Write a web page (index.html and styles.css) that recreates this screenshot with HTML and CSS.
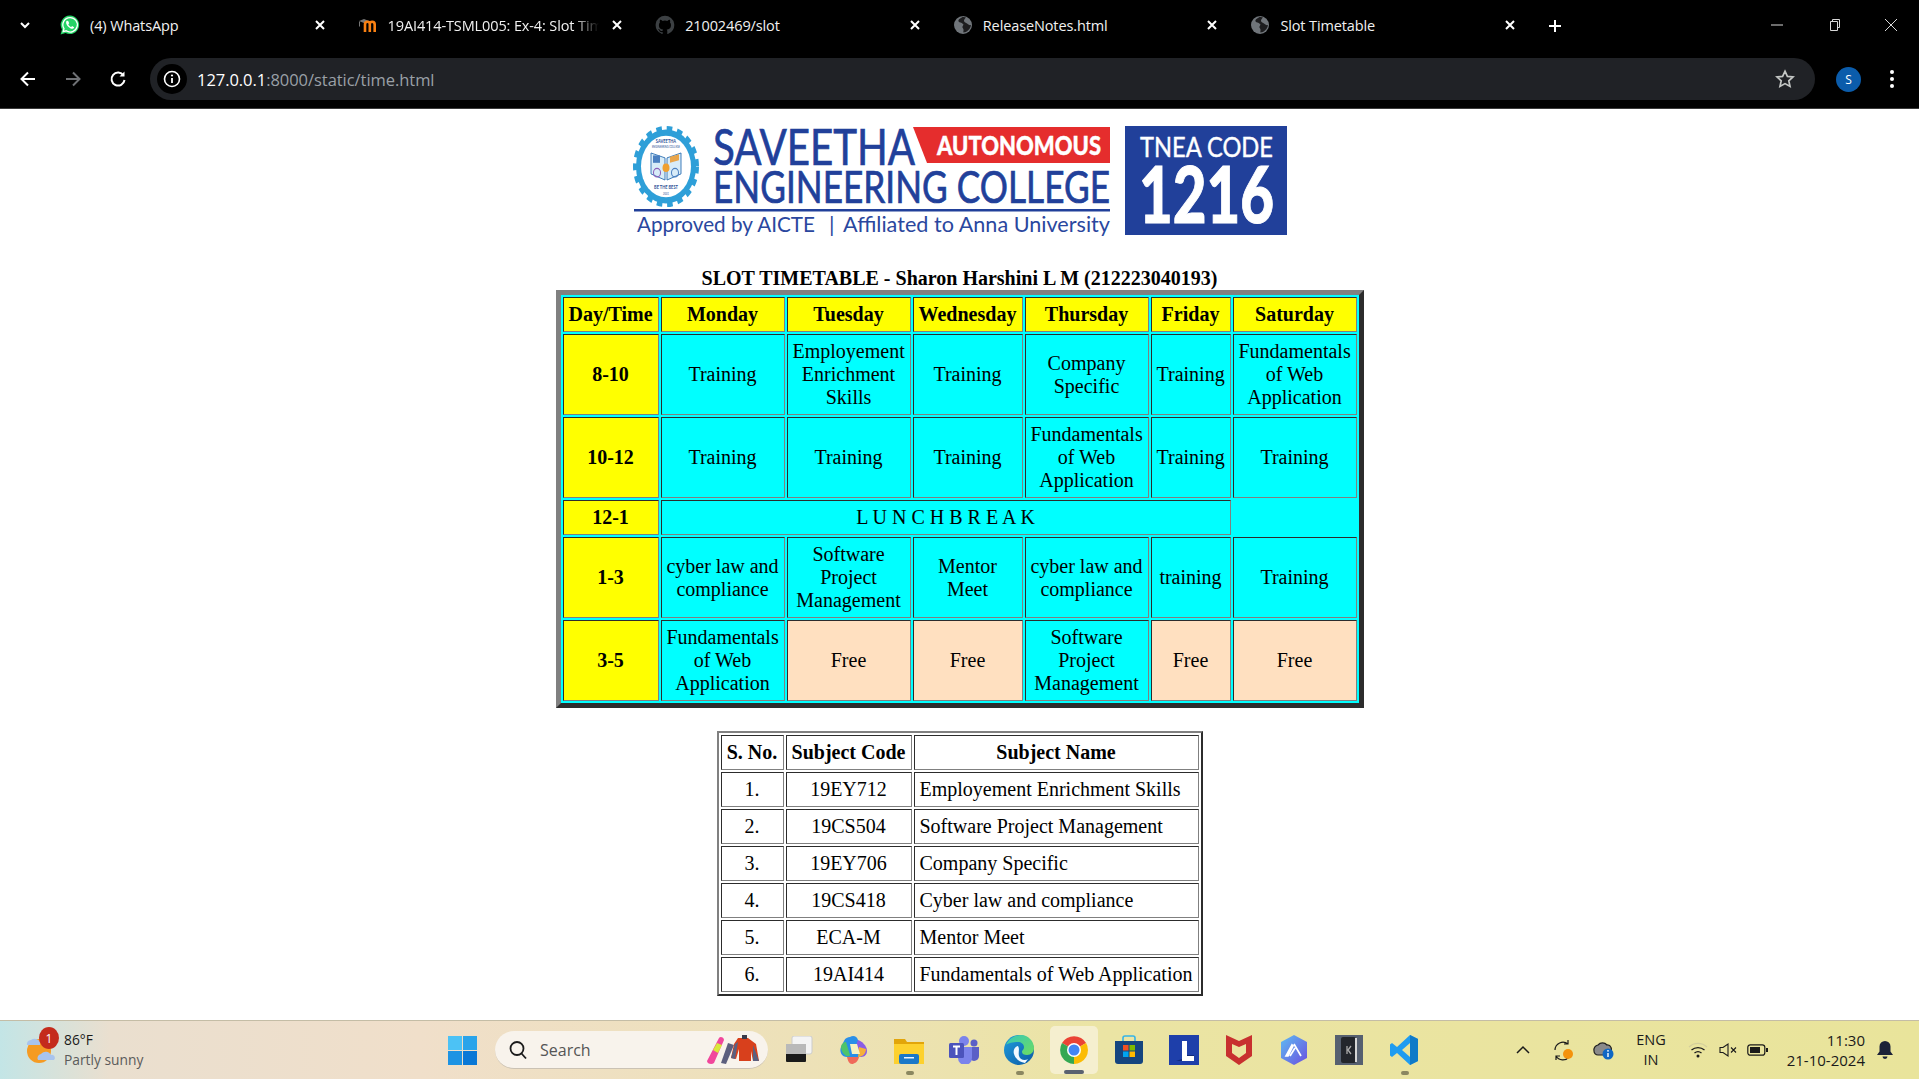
FILE: index.html
```html
<!DOCTYPE html>
<html lang="en">
<head>
<meta charset="utf-8">
<title>Slot Timetable</title>
<link rel="stylesheet" href="styles.css">
</head>
<body>
<div class="screen">
<header class="chrome">
  <div class="tabbar">
    <div class="tab-search"><svg width="14" height="14" viewBox="0 0 14 14"><path d="M3 5l4 4 4-4" class="ln-white2"/></svg></div>
    <div class="tab">
      <svg class="fav" viewBox="0 0 20 20"><path d="M10 .5a9.3 9.3 0 0 0-8 14L.6 19.4l5-1.3A9.3 9.3 0 1 0 10 .5z" fill="#25d366"/><path d="M10 2.6a7.2 7.2 0 0 0-6 11.1l-.8 2.9 3-.8A7.2 7.2 0 1 0 10 2.6z" fill="none" stroke="#fff" stroke-width="1.3"/><path d="M7.2 5.8c-.4 0-1 .5-1.1 1.4-.2 1.400.9 3.200 2.200 4.500 1.400 1.300 3 2.200 4.300 2 .9-.1 1.500-.8 1.500-1.400l-2-1.200-.9 1c-1-.3-2.500-1.700-2.900-2.900l.9-.9-1-2.300z" fill="#fff"/></svg>
      <span class="tab-title">(4) WhatsApp</span>
      <svg class="tab-x" viewBox="0 0 16 16"><path d="M4 4l8 8M12 4l-8 8" class="ln-white2"/></svg>
    </div>
    <div class="tab">
      <svg class="fav" viewBox="0 0 20 20"><path d="M1 6l5-2 5 2-5 2z" fill="#777"/><path d="M1.500 6.500v5" stroke="#777" stroke-width="1"/><path d="M7 17V9.500c0-1.800 1-2.700 2.500-2.700s2.300.9 2.300 2.300V17M11.800 9c0-1.400 1-2.200 2.400-2.200 1.500 0 2.500 1 2.500 2.800V17" fill="none" stroke="#f98012" stroke-width="2.600"/></svg>
      <span class="tab-title tab-fade">19AI414-TSML005: Ex-4: Slot Timetable</span>
      <svg class="tab-x" viewBox="0 0 16 16"><path d="M4 4l8 8M12 4l-8 8" class="ln-white2"/></svg>
    </div>
    <div class="tab">
      <svg class="fav" viewBox="0 0 20 20"><path d="M10 .8a9.400 9.400 0 0 0-3 18.300c.5.100.6-.2.600-.4v-1.700c-2.600.6-3.200-1.100-3.200-1.100-.4-1.100-1-1.400-1-1.400-.9-.6.100-.6.100-.6.900.1 1.400 1 1.400 1 .8 1.400 2.200 1 2.700.8.100-.6.300-1 .6-1.200-2.100-.2-4.300-1-4.300-4.600 0-1 .4-1.900 1-2.500-.1-.3-.4-1.200.1-2.500 0 0 .8-.3 2.600 1a9 9 0 0 1 4.700 0c1.800-1.300 2.600-1 2.600-1 .5 1.300.2 2.200.1 2.500.6.600 1 1.500 1 2.500 0 3.600-2.200 4.400-4.300 4.600.3.300.6.900.6 1.700v2.500c0 .2.100.5.600.4A9.400 9.400 0 0 0 10 .8z" fill="#3c4043"/></svg>
      <span class="tab-title">21002469/slot</span>
      <svg class="tab-x" viewBox="0 0 16 16"><path d="M4 4l8 8M12 4l-8 8" class="ln-white2"/></svg>
    </div>
    <div class="tab">
      <svg class="fav" viewBox="0 0 20 20"><circle cx="10" cy="10" r="9" fill="#70757a"/><path d="M10 1.500c-1.500 1.500-3.500 2-4.500 3.500-.5 1 .5 2.500 2 2.500 1 0 1.500 1 2.500 1.500 1 .5 0 1.500-.5 2.500-.5 1 .5 1.500 1 3 .3 1-.5 2.500 0 3 3-.2 7-3 7.500-7.500-1.500.5-3-.5-4-1.500-1-1-2.500-1-3-2.500-.3-1 1-2.500 2-3.500-.8-.5-2-.7-3-.5z" fill="#1d1d1f"/></svg>
      <span class="tab-title">ReleaseNotes.html</span>
      <svg class="tab-x" viewBox="0 0 16 16"><path d="M4 4l8 8M12 4l-8 8" class="ln-white2"/></svg>
    </div>
    <div class="tab">
      <svg class="fav" viewBox="0 0 20 20"><circle cx="10" cy="10" r="9" fill="#70757a"/><path d="M10 1.500c-1.500 1.500-3.500 2-4.500 3.500-.5 1 .5 2.500 2 2.500 1 0 1.500 1 2.500 1.500 1 .5 0 1.500-.5 2.500-.5 1 .5 1.500 1 3 .3 1-.5 2.500 0 3 3-.2 7-3 7.500-7.500-1.500.5-3-.5-4-1.500-1-1-2.500-1-3-2.500-.3-1 1-2.500 2-3.500-.8-.5-2-.7-3-.5z" fill="#1d1d1f"/></svg>
      <span class="tab-title">Slot Timetable</span>
      <svg class="tab-x" viewBox="0 0 16 16"><path d="M4 4l8 8M12 4l-8 8" class="ln-white2"/></svg>
    </div>
    <div class="tab-new"><svg width="16" height="16" viewBox="0 0 16 16"><path d="M8 2v12M2 8h12" class="ln-white2"/></svg></div>
    <div class="win-controls">
      <svg width="14" height="14" viewBox="0 0 14 14"><path d="M1 7h12" class="ln-thin"/></svg>
      <svg width="14" height="14" viewBox="0 0 14 14"><path d="M3.500 3.500h7v9h-7zM5.500 3.500V1.500h7v8h-2" class="ln-thin"/></svg>
      <svg width="14" height="14" viewBox="0 0 14 14"><path d="M1 1l12 12M13 1L1 13" class="ln-thin"/></svg>
    </div>
  </div>
  <div class="toolbar">
    <div class="nav-btn"><svg width="20" height="20" viewBox="0 0 20 20"><path d="M17 10H4M10 3.500L3.500 10l6.500 6.500" class="ln-white2"/></svg></div>
    <div class="nav-btn"><svg width="20" height="20" viewBox="0 0 20 20"><path d="M3 10h13M10 3.500l6.500 6.500-6.500 6.500" class="ln-gray2"/></svg></div>
    <div class="nav-btn"><svg width="20" height="20" viewBox="0 0 20 20"><path d="M15.500 6.500A6.500 6.500 0 1 0 16.500 11" class="ln-white2"/><path d="M16.500 2.500v5h-5z" fill="#fff"/></svg></div>
    <div class="omnibox">
      <div class="site-info"><svg width="18" height="18" viewBox="0 0 18 18"><circle cx="9" cy="9" r="7.500" fill="none" stroke="#fff" stroke-width="1.600"/><path d="M9 8v5" stroke="#fff" stroke-width="1.800"/><circle cx="9" cy="5.500" r="1.100" fill="#fff"/></svg></div>
      <span class="url"><span class="url-host">127.0.0.1</span>:8000/static/time.html</span>
      <svg class="star" width="20" height="20" viewBox="0 0 20 20"><path d="M10 2.200l2.400 5.200 5.600.6-4.200 3.800 1.200 5.600L10 14.600 5 17.400l1.200-5.600L2 8l5.600-.6z" fill="none" stroke="#c4c7c5" stroke-width="1.700"/></svg>
    </div>
    <div class="avatar">S</div>
    <div class="menu-dots"><i></i><i></i><i></i></div>
  </div>
</header>

<main class="page">
  <svg class="logo" viewBox="632 126 655 110" role="img" aria-label="Saveetha Engineering College logo">
    <g transform="translate(666 166.500) scale(1 1.230) translate(-666 -166)">
      <circle cx="666" cy="166" r="27" class="gear-ring"/>
      <circle cx="666" cy="166" r="30.500" class="gear-teeth"/>
      <circle cx="666" cy="166" r="25" class="gear-face"/>
      <text x="666" y="147" class="logo-mini">SAVEETHA</text>
      <text x="666" y="151" class="logo-micro">ENGINEERING COLLEGE</text>
      <path d="M651 155l14 4v18l-14-5zM681 155l-14 4v18l14-5z" fill="#d8ecf8" stroke="#2c6fb3" stroke-width=".8"/>
      <rect x="653" y="157" width="7" height="6" fill="#4a7fc0"/>
      <path d="M670 158l9-2v5l-9 2z" fill="#e9a54a"/>
      <circle cx="666" cy="167" r="3.500" fill="#f0a030"/>
      <circle cx="657" cy="171" r="3.500" fill="none" stroke="#8a5cb8"/>
      <circle cx="675" cy="171" r="3.500" fill="none" stroke="#4a7fc0"/>
      <text x="666" y="184" class="logo-mini">BE THE BEST</text>
      <text x="666" y="189" class="logo-micro">2001</text>
    </g>
    <text x="713" y="165" class="logo-t1" textLength="202" lengthAdjust="spacingAndGlyphs">SAVEETHA</text>
    <path d="M913 127h197v36H927z" fill="#e52d2d"/>
    <text x="937" y="155" class="logo-auto" textLength="164" lengthAdjust="spacingAndGlyphs">AUTONOMOUS</text>
    <text x="713" y="203" class="logo-t2" textLength="397" lengthAdjust="spacingAndGlyphs">ENGINEERING COLLEGE</text>
    <rect x="634" y="209" width="476" height="2.500" fill="#21409a"/>
    <text x="637" y="232" class="logo-t3" textLength="178" lengthAdjust="spacingAndGlyphs">Approved by AICTE</text>
    <text x="829" y="232" class="logo-t3">|</text>
    <text x="843" y="232" class="logo-t3" textLength="267" lengthAdjust="spacingAndGlyphs">Affiliated to Anna University</text>
    <rect x="1125" y="126" width="162" height="109" fill="#21409a"/>
    <text x="1140" y="157" class="logo-tnea" textLength="133" lengthAdjust="spacingAndGlyphs">TNEA CODE</text>
    <text x="1139" y="223" class="logo-code" textLength="135" lengthAdjust="spacingAndGlyphs">1216</text>
  </svg>

  <h1 class="title">SLOT TIMETABLE - Sharon Harshini L M (212223040193)</h1>

  <table class="slots">
    <colgroup>
      <col class="c-day"><col class="c-wide"><col class="c-wide"><col class="c-wed"><col class="c-wide"><col class="c-fri"><col class="c-wide">
    </colgroup>
    <tr><th>Day/Time</th><th>Monday</th><th>Tuesday</th><th>Wednesday</th><th>Thursday</th><th>Friday</th><th>Saturday</th></tr>
    <tr><th>8-10</th><td>Training</td><td>Employement Enrichment Skills</td><td>Training</td><td>Company Specific</td><td>Training</td><td>Fundamentals of Web Application</td></tr>
    <tr><th>10-12</th><td>Training</td><td>Training</td><td>Training</td><td>Fundamentals of Web Application</td><td>Training</td><td>Training</td></tr>
    <tr><th>12-1</th><td colspan="5">L U N C H B R E A K</td></tr>
    <tr><th>1-3</th><td class="nw">cyber law and<br>compliance</td><td>Software Project Management</td><td>Mentor Meet</td><td class="nw">cyber law and<br>compliance</td><td>training</td><td>Training</td></tr>
    <tr><th>3-5</th><td>Fundamentals of Web Application</td><td class="free">Free</td><td class="free">Free</td><td>Software Project Management</td><td class="free">Free</td><td class="free">Free</td></tr>
  </table>

  <table class="subjects">
    <colgroup><col class="s-no"><col class="s-code"><col class="s-name"></colgroup>
    <tr><th>S. No.</th><th>Subject Code</th><th>Subject Name</th></tr>
    <tr><td>1.</td><td>19EY712</td><td class="name">Employement Enrichment Skills</td></tr>
    <tr><td>2.</td><td>19CS504</td><td class="name">Software Project Management</td></tr>
    <tr><td>3.</td><td>19EY706</td><td class="name">Company Specific</td></tr>
    <tr><td>4.</td><td>19CS418</td><td class="name">Cyber law and compliance</td></tr>
    <tr><td>5.</td><td>ECA-M</td><td class="name">Mentor Meet</td></tr>
    <tr><td>6.</td><td>19AI414</td><td class="name">Fundamentals of Web Application</td></tr>
  </table>
</main>

<footer class="taskbar">
  <div class="weather">
    <div class="weather-icon">
      <svg width="32" height="36" viewBox="0 0 32 36"><circle cx="15" cy="20" r="12" fill="#f59b23"/><path d="M3 14a4 4 0 0 1 4-5 6 6 0 0 1 9 2v3z" fill="#a8c4ee"/><path d="M14 29a4 4 0 0 1 3-6 6 6 0 0 1 10 1 3 3 0 0 1 3 5z" fill="#a8c4ee"/></svg>
      <span class="badge">1</span>
    </div>
    <div class="weather-text"><span class="temp">86°F</span><span class="cond">Partly sunny</span></div>
  </div>
  <div class="start">
    <svg width="29" height="29" viewBox="0 0 29 29"><rect width="14" height="14" fill="#4cc2f5"/><rect x="15" width="14" height="14" fill="#2aa4ea"/><rect y="15" width="14" height="14" fill="#1d93e3"/><rect x="15" y="15" width="14" height="14" fill="#0a78d6"/></svg>
  </div>
  <div class="search">
    <svg width="20" height="20" viewBox="0 0 20 20"><circle cx="9" cy="8.500" r="6.500" fill="none" stroke="#1b1b1b" stroke-width="1.800"/><path d="M13.500 13.500l4.500 5" stroke="#1b1b1b" stroke-width="1.800"/></svg>
    <span class="search-label">Search</span>
    <svg class="search-art" width="54" height="30" viewBox="0 0 54 30"><path d="M1 26L13 3c1-2 5-1 5 2L8 28c-2 2-7 1-7-2z" fill="#f1479c"/><path d="M7 15l4-7 5 2-4 8z" fill="#d9e83a"/><path d="M22 8l6 2-8 19-5-1z" fill="#5c5f7e"/><path d="M32 3h10l8 6 3 17h-6l-2-10v10H33V14l-3 10-5-1 3-14z" fill="#d8401c"/><path d="M47 10l6 16h-6zM25 23l4-14 3-2-3 17z" fill="#5b6080"/><rect x="36" y="0" width="5" height="4" fill="#3a3a4a"/></svg>
  </div>
  <div class="apps">
    <div class="app"><svg width="30" height="28" viewBox="0 0 30 28"><rect x="8" y="0" width="20" height="18" rx="2" fill="#f4f4f4" stroke="#ccc"/><rect x="2" y="8" width="20" height="18" rx="1" fill="#1a1a1a"/><rect x="2" y="8" width="20" height="10" fill="#b9b9b9"/></svg></div>
    <div class="app"><svg width="30" height="30" viewBox="0 0 30 30"><path d="M11 2c3-2 7-1 8 3l4 12c1 4-3 5-5 5H8C3 22 0 17 2 12l3-6c1-3 4-4 6-4z" fill="#2a8fe8"/><path d="M19 5c3 1 9 5 9 11 0 5-4 6-7 6l-4-12z" fill="#8a5ce6"/><path d="M2 12c0-3 3-5 5-5l4 13c-1 3-8 1-9-8z" fill="#4fc46a"/><path d="M8 22h12c-1 5-5 7-7 7-3 0-4-3-5-7z" fill="#f06a5a"/><path d="M20 12l7 2c0 5-4 8-8 8z" fill="#f5b03a"/><path d="M11 9h7l3 10H13z" fill="#f7f2c0"/></svg></div>
    <div class="app has-dot"><svg width="30" height="28" viewBox="0 0 30 28"><path d="M0 3h11l2 3h17v22H0z" fill="#e2a50a"/><path d="M0 8h30v20H0z" fill="#fdd12e"/><rect x="5" y="18" width="20" height="10" rx="2" fill="#1a78c8"/><rect x="10" y="21" width="10" height="1.500" fill="#e8f4ff"/></svg></div>
    <div class="app"><svg width="30" height="28" viewBox="0 0 30 28"><circle cx="25" cy="7" r="3.500" fill="#5b5fc7"/><circle cx="15" cy="5" r="5" fill="#7b83eb"/><path d="M20 11h10v9a5 5 0 0 1-10 0z" fill="#5b5fc7"/><path d="M9 11h14v11a7 7 0 0 1-14 0z" fill="#7b83eb"/><rect x="0" y="7" width="15" height="15" rx="1.500" fill="#4b53bc"/><path d="M4 10.500h7M7.500 10.500V19" stroke="#fff" stroke-width="2"/></svg></div>
    <div class="app has-dot"><svg width="30" height="30" viewBox="0 0 30 30"><defs><linearGradient id="edgeA" x1="0" y1="0" x2="1" y2="1"><stop offset="0" stop-color="#1f9ddd"/><stop offset="1" stop-color="#0c59a4"/></linearGradient><linearGradient id="edgeB" x1="0" y1="0" x2="1" y2="1"><stop offset="0" stop-color="#37c9b8"/><stop offset="1" stop-color="#6fdc5f"/></linearGradient></defs><circle cx="15" cy="15" r="15" fill="url(#edgeA)"/><path d="M2 10C5 3 12 0 17 0c7 0 13 6 13 13 0 4-3 7-7 7-3 0-5-1-5-3 0-2 2-2 2-5 0-3-3-5-6-5-5 0-10 1-12 3z" fill="url(#edgeB)"/><path d="M14 11c-4 1-5 5-4 8 1 4 5 8 11 9l3-4c-3 2-8 1-9-3-1-4 1-7-1-10z" fill="#f0f8ff"/></svg></div>
    <div class="app app-active has-bar"><svg width="30" height="30" viewBox="0 0 30 30"><path d="M15 15L3 8A14 14 0 0 1 27.100 8z" fill="#ea4335"/><path d="M15 15L27.100 8A14 14 0 0 1 15 29z" fill="#fbbc04"/><path d="M15 15L15 29A14 14 0 0 1 3 8z" fill="#34a853"/><circle cx="15" cy="15" r="7" fill="#fff"/><circle cx="15" cy="15" r="5.500" fill="#4285f4"/></svg></div>
    <div class="app"><svg width="30" height="30" viewBox="0 0 30 30"><path d="M9 6V3a2 2 0 0 1 2-2h8a2 2 0 0 1 2 2v3" fill="none" stroke="#36b4e8" stroke-width="1.600"/><path d="M1 6h28v20a3 3 0 0 1-3 3H4a3 3 0 0 1-3-3z" fill="#15457f"/><rect x="9" y="10" width="5.500" height="5.500" fill="#f25022"/><rect x="15.500" y="10" width="5.500" height="5.500" fill="#7fba00"/><rect x="9" y="16.500" width="5.500" height="5.500" fill="#00a4ef"/><rect x="15.500" y="16.500" width="5.500" height="5.500" fill="#ffb900"/></svg></div>
    <div class="app"><svg width="30" height="30" viewBox="0 0 30 30"><rect width="30" height="30" fill="#1e3faa"/><path d="M7 26L13 24V6h5v14h7v6z" fill="#102a78"/><path d="M13 6h5v15h7v5H13z" fill="#fff"/></svg></div>
    <div class="app"><svg width="26" height="30" viewBox="0 0 26 30"><path d="M0 0l13 6 13-6v21l-13 9-13-9z" fill="#c8302f"/><path d="M6 9l7 3 7-3v9l-7 5-7-5z" fill="#ece49f"/></svg></div>
    <div class="app"><svg width="28" height="30" viewBox="0 0 28 30"><defs><linearGradient id="atlasG" x1="0" y1="0" x2="1" y2="1"><stop offset="0" stop-color="#5dbcf2"/><stop offset="1" stop-color="#6b4fe0"/></linearGradient></defs><path d="M14 0l13 7v16l-13 7-13-7V7z" fill="url(#atlasG)"/><path d="M6 21l6-11 1 1-5 10zM14 9l7 12M10 21l5-8" fill="none" stroke="#fff" stroke-width="1.700"/></svg></div>
    <div class="app"><svg width="28" height="30" viewBox="0 0 28 30"><rect width="28" height="30" fill="#566070"/><rect x="6" y="2" width="15" height="26" rx="2" fill="#23262c"/><rect x="20" y="3" width="2" height="24" fill="#d5d5d5"/><path d="M12 11v8M16 11l-3 4 3 4" stroke="#aaa" stroke-width="1.300" fill="none"/></svg></div>
    <div class="app has-dot"><svg width="28" height="30" viewBox="0 0 28 30"><path d="M20 0l8 4v22l-8 4L7 18l-5 4-2-1.500V9.500L2 8l5 4z" fill="#1f9cf0"/><path d="M20 0l8 4v22l-8 4z" fill="#0f7ac8"/><path d="M20 8l-8 7 8 7z" fill="#e9e49b"/></svg></div>
  </div>
  <div class="tray">
    <div class="tray-i t-chev"><svg width="14" height="10" viewBox="0 0 14 10"><path d="M1 8l6-6 6 6" fill="none" stroke="#1a1a1a" stroke-width="1.500"/></svg></div>
    <div class="tray-i t-sync"><svg width="22" height="22" viewBox="0 0 22 22"><path d="M3 11a8 8 0 0 1 13-6M16 1v4h-4M17 18a8 8 0 0 1-13-1M4 21v-4h4" fill="none" stroke="#1a1a1a" stroke-width="1.200"/><circle cx="16" cy="15" r="5" fill="#f4920c"/></svg></div>
    <div class="tray-i t-cloud"><svg width="22" height="20" viewBox="0 0 22 20"><path d="M2 11a5 5 0 0 1 4-6 6 6 0 0 1 9 0 4 4 0 0 1 3 7l-2 3H6a4 4 0 0 1-4-4z" fill="#8a8a8a" stroke="#222" stroke-width="1.200"/><circle cx="16" cy="14" r="5.500" fill="#0f67c4"/><path d="M16 13v4" stroke="#fff" stroke-width="1.400"/><circle cx="16" cy="10.800" r=".9" fill="#fff"/></svg></div>
    <div class="tray-lang"><span>ENG</span><span>IN</span></div>
    <div class="tray-i t-wifi"><svg width="20" height="16" viewBox="0 0 20 16"><path d="M1 5a13 13 0 0 1 18 0" fill="none" stroke="#d4cf9c" stroke-width="1.300"/><path d="M3.500 8a10 10 0 0 1 13 0M6.500 11a5.500 5.500 0 0 1 7 0" fill="none" stroke="#1a1a1a" stroke-width="1.300"/><circle cx="10" cy="14" r="1.500" fill="#1a1a1a"/></svg></div>
    <div class="tray-i t-vol"><svg width="20" height="16" viewBox="0 0 20 16"><path d="M1 5.500h3L9 2v12L4 10.500H1z" fill="none" stroke="#1a1a1a" stroke-width="1.100"/><path d="M12 5.500l5 5M17 5.500l-5 5" stroke="#1a1a1a" stroke-width="1.100"/></svg></div>
    <div class="tray-i t-bat"><svg width="21" height="14" viewBox="0 0 21 14"><rect x=".8" y="1.800" width="17" height="10.400" rx="2.500" fill="none" stroke="#1a1a1a" stroke-width="1.200"/><rect x="3" y="4" width="10" height="6" fill="#1a1a1a"/><rect x="19" y="5" width="2" height="4" fill="#1a1a1a"/></svg></div>
    <div class="clock"><span>11:30</span><span>21-10-2024</span></div>
    <div class="tray-i t-bell"><svg width="18" height="20" viewBox="0 0 18 20"><path d="M9 1a5.500 5.500 0 0 1 5.500 5.500v5l2.500 3.500H1l2.500-3.500v-5A5.500 5.500 0 0 1 9 1z" fill="#1c2238"/><path d="M6.500 16.500h5a2.500 2.500 0 0 1-5 0z" fill="#1c2238"/></svg></div>
  </div>
</footer>
</div>
</body>
</html>
```

FILE: styles.css
```css
* { box-sizing: border-box; }
html, body { margin: 0; height: 100%; overflow: hidden; background: #fff; }
.screen { display: flex; flex-direction: column; height: 1079px; width: 1919px; }

/* browser chrome */
.chrome { background: #000; color: #fff; font-family: "Open Sans", "Noto Sans", sans-serif; flex: none; }
.ln-white2 { fill: none; stroke: #fff; stroke-width: 2; }
.ln-gray2 { fill: none; stroke: #6f7175; stroke-width: 2; }
.ln-thin { fill: none; stroke: #d8d8d8; stroke-width: 1; }
.tabbar { height: 55px; display: flex; align-items: center; padding-bottom: 5px; }
.tab-search { width: 52px; display: flex; justify-content: center; padding-right: 2px; }
.tab { width: 297.600px; height: 34px; display: flex; align-items: center; padding: 0 22px 0 8px; flex: none; }
.fav { width: 20px; height: 20px; margin-right: 10px; flex: none; }
.tab-title { flex: 1; font-size: 14.500px; white-space: nowrap; overflow: hidden; color: #f1f1f1; margin-right: 10px; letter-spacing: -.12px; }
.tab-fade { -webkit-mask-image: linear-gradient(90deg, #000 88%, transparent 100%); mask-image: linear-gradient(90deg, #000 88%, transparent 100%); }
.tab-x { width: 16px; height: 16px; flex: none; }
.tab-new { width: 16px; height: 16px; margin-left: 7.500px; flex: none; }
.win-controls { margin-left: auto; display: flex; gap: 43px; padding-right: 21px; }
.toolbar { height: 54px; display: flex; align-items: center; padding: 3px 12px 8px 5px; border-bottom: 1px solid #3a3a3a; }
.nav-btn { width: 45px; height: 42px; display: flex; align-items: center; justify-content: center; flex: none; }
.omnibox { flex: 1; margin-left: 10px; height: 42px; border-radius: 21px; background: #202226; display: flex; align-items: center; padding: 0 20px 0 7px; }
.site-info { width: 30px; height: 30px; border-radius: 50%; background: #000; display: flex; align-items: center; justify-content: center; flex: none; }
.url { margin-left: 10px; padding-top: 1px; font-size: 16.500px; color: #9aa0a6; flex: 1; letter-spacing: -.05px; }
.url-host { color: #fff; }
.avatar { margin-left: 21px; width: 25px; height: 25px; border-radius: 50%; background: #0b5cab; color: #fff; font-size: 12px; display: flex; align-items: center; justify-content: center; flex: none; }
.menu-dots { margin-left: 16px; width: 30px; display: flex; flex-direction: column; align-items: center; gap: 3px; flex: none; }
.menu-dots i { width: 4px; height: 4px; border-radius: 50%; background: #fff; }

/* page */
.page { flex: 1; display: flex; flex-direction: column; align-items: center; padding-top: 17px; font-family: "Liberation Serif", "Times New Roman", serif; font-size: 20px; color: #000; overflow: hidden; }
.logo { display: block; width: 655px; height: 110px; flex: none; overflow: visible; }
.logo text { font-family: Lato, "Open Sans", sans-serif; }
.logo .logo-mini { font-size: 4px; fill: #2c4f96; text-anchor: middle; font-weight: 700; }
.logo .logo-micro { font-size: 2.500px; fill: #2c4f96; text-anchor: middle; }
.gear-ring { fill: none; stroke: #2e9fd8; stroke-width: 6px; }
.gear-teeth { fill: none; stroke: #2e9fd8; stroke-width: 5px; stroke-dasharray: 5.500 4.800; }
.gear-face { fill: #fff; }
.logo-t1 { font-size: 51px; fill: #21409a; stroke: #21409a; stroke-width: .7px; }
.logo-t2 { font-size: 44px; fill: #21409a; stroke: #21409a; stroke-width: .7px; }
.logo-t3 { font-size: 22px; fill: #2a479e; }
.logo-auto { font-size: 26px; fill: #fff; font-weight: 900; stroke: #fff; stroke-width: .4px; }
.logo-tnea { font-size: 26px; fill: #fff; stroke: #fff; stroke-width: .4px; }
.logo-code { font-size: 78px; fill: #fff; font-weight: 900; stroke: #fff; stroke-width: 1px; }
.title { margin: 31px 0 0; font-size: 20px; line-height: 23px; font-weight: 700; text-align: center; }
table { border-collapse: separate; border-spacing: 2px; flex: none; }
th, td { border: 1px inset gray; padding: 5px; font-size: 20px; line-height: 23px; text-align: center; font-weight: 400; }
th { font-weight: 700; }
.slots { table-layout: fixed; width: 808px; background: #0ff; border: 5px outset gray; }
.slots th { background: #ff0; }
.slots td { background: #0ff; }
.slots td.free { background: #ffe0c0; }
.slots td.nw { white-space: nowrap; padding-left: 0; padding-right: 0; }
.c-day { width: 96px; }
.c-wide { width: 124px; }
.c-wed { width: 110px; }
.c-fri { width: 80px; }
.subjects { margin-top: 23px; border: 2px outset gray; table-layout: fixed; width: 486px; }
.subjects td.name { text-align: left; }
.s-no { width: 63px; }
.s-code { width: 126px; }
.s-name { width: 285px; }

/* taskbar */
.taskbar { height: 59px; flex: none; display: flex; align-items: center; padding-left: 24px; border-top: 1px solid #c4bda6; background: linear-gradient(90deg, #c3e5e6 0, #eadfcf 110px, #f0dfca 420px, #ede1b8 800px, #ebe4a4 1100px, #e9e49b 1919px); font-family: "Open Sans", "Noto Sans", sans-serif; color: #1a1a1a; }
.weather { width: 416px; display: flex; align-items: center; flex: none; }
.weather-icon { position: relative; width: 40px; height: 38px; flex: none; }
.badge { position: absolute; left: 15px; top: -4px; width: 20px; height: 22px; border-radius: 50%; background: #c42b1c; color: #fff; font-size: 12px; display: flex; align-items: center; justify-content: center; }
.weather-text { display: flex; flex-direction: column; font-size: 13.800px; line-height: 20px; }
.cond { color: #5b5b5b; }
.start { width: 45px; display: flex; justify-content: center; flex: none; }
.search { margin-left: 10px; width: 273px; height: 38px; border-radius: 19px; background: #f8f3ec; border-bottom: 1px solid #cbc2b4; display: flex; align-items: center; padding: 0 8px 0 13px; flex: none; }
.search-label { margin-left: 12px; font-size: 16px; color: #555; flex: 1; }
.apps { margin-left: 3.500px; display: flex; flex: none; }
.app { position: relative; width: 55px; height: 48px; display: flex; align-items: center; justify-content: center; }
.has-dot::after { content: ""; position: absolute; left: 24px; bottom: -1px; width: 8px; height: 4px; border-radius: 2px; background: #8b8760; }
.app-active { background: #f5efcf; border-radius: 5px; margin: 0 3.500px; width: 48px; }
.has-bar::after { content: ""; position: absolute; left: 14px; bottom: 0; width: 20px; height: 4px; border-radius: 2px; background: #5a6270; }
.tray { margin-left: auto; display: flex; align-items: center; padding-right: 14px; flex: none; }
.tray-i { display: flex; justify-content: center; align-items: center; flex: none; }
.t-chev, .t-sync, .t-cloud, .t-bell { width: 40px; }
.t-wifi { width: 38px; }
.t-vol { width: 24px; }
.t-bat { width: 32px; }
.tray-lang { width: 56px; display: flex; flex-direction: column; align-items: center; font-size: 14.500px; line-height: 20px; }
.clock { width: 92px; display: flex; flex-direction: column; align-items: flex-end; font-size: 15px; line-height: 20px; white-space: nowrap; }
```
